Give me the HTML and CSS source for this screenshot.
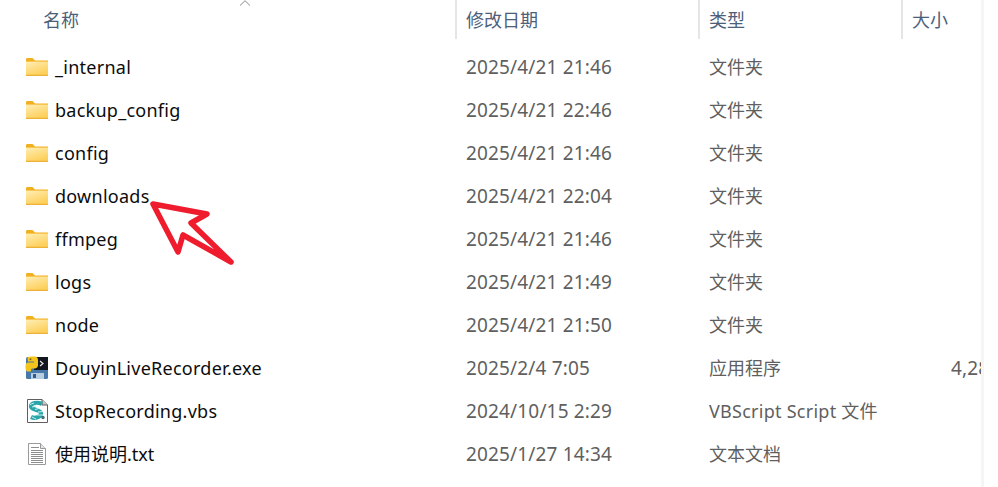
FILE: index.html
```html
<!DOCTYPE html>
<html lang="zh-CN">
<head>
  <meta charset="UTF-8">
  <title>文件列表</title>
  <link rel="stylesheet" href="styles.css">
</head>
<body>
  <svg class="defs" width="0" height="0">
    <defs>
      <linearGradient id="folderFill" x1="0" y1="0" x2="0.5" y2="1">
        <stop offset="0" stop-color="#ffeeb5"/>
        <stop offset="1" stop-color="#fdd05c"/>
      </linearGradient>
      <symbol id="folder" viewBox="0 0 24 24">
        <path d="M1 4.500C1 3.700 1.600 3 2.400 3H7.500L10 5.500H22.500C23 5.500 23 6 23 6.500V20.500H1Z" fill="#f2b01e"/>
        <path d="M1 6.600H23V20H1Z" fill="url(#folderFill)"/>
        <path d="M1 19.800H23V20.800H1Z" fill="#e9a825"/>
      </symbol>
    </defs>
  </svg>

  <div class="window">
    <div class="list">
      <div class="header">
        <div class="col col-name">名称</div>
        <div class="col">修改日期</div>
        <div class="col">类型</div>
        <div class="col">大小</div>
        <svg class="sort" width="12" height="6" viewBox="0 0 12 6"><path d="M1 5.500L6 .7L11 5.500" fill="none" stroke="#8a8a8a" stroke-width="1"/></svg>
      </div>

      <div class="row">
        <div class="name"><svg class="icon"><use href="#folder"/></svg><span class="latin">_internal</span></div>
        <div class="cell cell-date">2025/4/21 21:46</div><div class="cell cell-type">文件夹</div><div class="cell"></div>
      </div>
      <div class="row">
        <div class="name"><svg class="icon"><use href="#folder"/></svg><span class="latin">backup_config</span></div>
        <div class="cell cell-date">2025/4/21 22:46</div><div class="cell cell-type">文件夹</div><div class="cell"></div>
      </div>
      <div class="row">
        <div class="name"><svg class="icon"><use href="#folder"/></svg><span class="latin">config</span></div>
        <div class="cell cell-date">2025/4/21 21:46</div><div class="cell cell-type">文件夹</div><div class="cell"></div>
      </div>
      <div class="row">
        <div class="name"><svg class="icon"><use href="#folder"/></svg><span class="latin">downloads</span></div>
        <div class="cell cell-date">2025/4/21 22:04</div><div class="cell cell-type">文件夹</div><div class="cell"></div>
      </div>
      <div class="row">
        <div class="name"><svg class="icon"><use href="#folder"/></svg><span class="latin">ffmpeg</span></div>
        <div class="cell cell-date">2025/4/21 21:46</div><div class="cell cell-type">文件夹</div><div class="cell"></div>
      </div>
      <div class="row">
        <div class="name"><svg class="icon"><use href="#folder"/></svg><span class="latin">logs</span></div>
        <div class="cell cell-date">2025/4/21 21:49</div><div class="cell cell-type">文件夹</div><div class="cell"></div>
      </div>
      <div class="row">
        <div class="name"><svg class="icon"><use href="#folder"/></svg><span class="latin">node</span></div>
        <div class="cell cell-date">2025/4/21 21:50</div><div class="cell cell-type">文件夹</div><div class="cell"></div>
      </div>
      <div class="row">
        <div class="name">
          <svg class="icon" viewBox="0 0 24 24">
            <rect x="1" y="1" width="22" height="22" rx="1.500" fill="#4679aa"/>
            <rect x="9" y="1" width="14" height="13" fill="#12161e"/>
            <path d="M15 5L18 7.500L15 10" fill="none" stroke="#e8e8e8" stroke-width="1.200"/>
            <path d="M2.500 1.500C4 .5 7 .3 9.500 .5C12 .7 13 2 13 4V9C13 11 11.500 12.500 9.500 12.500H7.500C6.500 12.500 6 13 6 14V15.500H3C1 15.500 .5 13 .5 10.500C.5 8 1.500 6.500 3.500 6.500H9V5.500H3Z" fill="#f5c41c"/>
            <circle cx="5.500" cy="3.200" r="1" fill="#8a6a14"/>
            <rect x="6" y="17" width="13" height="6" fill="#b9cde0"/>
            <rect x="8" y="18" width="3" height="4" fill="#2f5c8c"/>
          </svg>
          <span class="latin">DouyinLiveRecorder.exe</span>
        </div>
        <div class="cell cell-date">2025/2/4 7:05</div><div class="cell cell-type">应用程序</div><div class="cell cell-date cell-size">4,286 KB</div>
      </div>
      <div class="row">
        <div class="name">
          <svg class="icon" viewBox="0 0 24 24">
            <path d="M2.500 .5H17L22.500 6V23.500H2.500Z" fill="#fff" stroke="#5f5f5f"/>
            <path d="M17 .5V6H22.500" fill="#c9c9c9" stroke="#5f5f5f"/>
            <path d="M17 5C12 2.500 6 4 6 7.500C6 11 16 10.500 16 14.500C16 18 10 20 6 18" fill="none" stroke="#2ba5a8" stroke-width="4.200"/>
            <path d="M5 5.500L9 4M7 8L11 7M10 10.500L14 9.500M13 13L18 12.500M12 16L18 16M7 18L11 20" stroke="#c4f0f2" stroke-width="1"/>
            <circle cx="18" cy="18.500" r="1.700" fill="#4a6f70"/>
          </svg>
          <span class="latin">StopRecording.vbs</span>
        </div>
        <div class="cell cell-date">2024/10/15 2:29</div><div class="cell cell-type latin">VBScript Script 文件</div><div class="cell"></div>
      </div>
      <div class="row">
        <div class="name">
          <svg class="icon" viewBox="0 0 24 24">
            <path d="M3.500 1.500H15.500L20.500 6.500V22.500H3.500Z" fill="#fff" stroke="#9a9a9a"/>
            <path d="M15.500 1.500V6.500H20.500" fill="#e4e4e4" stroke="#9a9a9a"/>
            <path d="M6 5.500H14M6 8.500H18M6 10.500H18M6 12.500H18M6 14.500H18M6 16.500H18M6 18.500H18M6 20.500H18" stroke="#8d8d8d" stroke-width="1"/>
          </svg>
          <span class="name-cjk">使用说明.txt</span>
        </div>
        <div class="cell cell-date">2025/1/27 14:34</div><div class="cell cell-type">文本文档</div><div class="cell"></div>
      </div>
    </div>
    <div class="strip"></div>
  </div>

  <!-- red annotation arrow drawn on top of the list -->
  <svg class="arrow" width="100" height="80" viewBox="0 0 100 80">
    <path d="M5 5L59 15L43 24L83 63L35 36L30 53Z" fill="none" stroke="#ee1c2c" stroke-width="5.500" stroke-linejoin="round" stroke-linecap="round"/>
  </svg>
</body>
</html>
```

FILE: styles.css
```css
html, body {
  margin: 0;
  padding: 0;
  background: #fff;
  height: 487px;
  overflow: hidden;
}

body {
  position: relative;
  font-family: "Noto Sans", "Noto Sans CJK SC", sans-serif;
  font-size: 18px;
}

.defs {
  display: block;
}

.window {
  display: flex;
  height: 487px;
}

.list {
  width: 981px;
  overflow: hidden;
}

.strip {
  width: 3px;
  background: #f5f5f5;
}

.header {
  position: relative;
  display: grid;
  grid-template-columns: 456px 243px 203px 79px;
  height: 39px;
  margin-bottom: 6px;
  color: #4c607a;
  font-family: "Noto Sans CJK SC", sans-serif;
}

.col {
  padding-left: 9px;
  line-height: 38px;
  border-left: 2px solid #e5e5e5;
  margin-left: -1px;
}

.col-name {
  padding-left: 43px;
  border-left: 0;
  margin-left: 0;
}

.sort {
  position: absolute;
  left: 239px;
  top: 0;
}

.row {
  display: grid;
  grid-template-columns: 456px 243px 203px 79px;
  height: 43px;
  align-items: center;
  color: #5f5f5f;
  white-space: nowrap;
}

.name {
  display: flex;
  align-items: center;
  gap: 6px;
  padding-left: 25px;
  color: #0c0c0c;
}

.name-cjk {
  padding-bottom: 2px;
}

.latin {
  letter-spacing: 0.26px;
}

.icon {
  width: 24px;
  height: 24px;
  flex: none;
}

.cell {
  padding-left: 10px;
  overflow: hidden;
}

.cell-date {
  font-size: 19px;
  letter-spacing: 0.16px;
}

.cell-type {
  padding-bottom: 2px;
}

.cell-size {
  padding-left: 49px;
}

.arrow {
  position: absolute;
  left: 148px;
  top: 199px;
}
```
